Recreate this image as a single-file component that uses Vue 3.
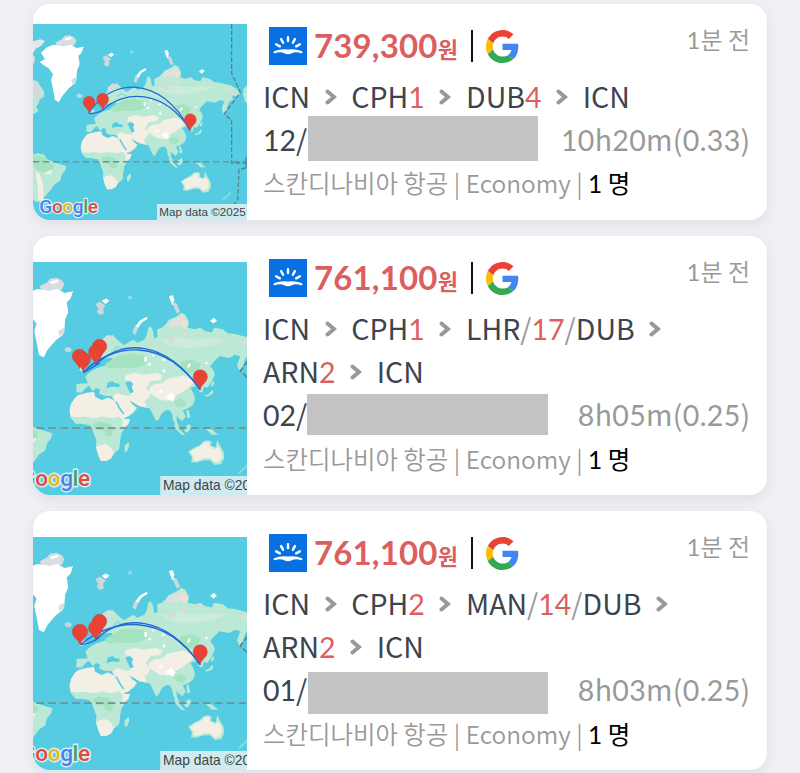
<script setup>
const AIRLINE = '스칸디나비아 항공'

// each stop is a list of [kind, text]: a = airport code, n = stay in days, s = slash
const flights = [
  {
    price: '739,300',
    route: [[['a', 'ICN']], [['a', 'CPH'], ['n', '1']], [['a', 'DUB'], ['n', '4']], [['a', 'ICN']]],
    month: '12',
    mask: { width: '230px', height: '45px', top: '-2px', left: '0px' },
    duration: '10h20m(0.33)',
    wide: false,
    pins: [[266, 339], [307, 330], [570, 391]],
    arcs: ['M266 339 C330 235 480 220 570 391', 'M307 330 C370 270 490 265 570 391', 'M266 341 Q290 341 307 330'],
  },
  {
    price: '761,100',
    route: [[['a', 'ICN']], [['a', 'CPH'], ['n', '1']], [['a', 'LHR'], ['s', '/'], ['n', '17'], ['s', '/'], ['a', 'DUB']], [['a', 'ARN'], ['n', '2']], [['a', 'ICN']]],
    month: '02',
    mask: { width: '241px', height: '41px', top: '-1px', left: '-1px' },
    duration: '8h05m(0.25)',
    wide: true,
    pins: [[317, 317], [307, 331], [266, 342], [276, 350], [571, 394]],
    arcs: ['M276 350 C350 278 475 258 571 394', 'M307 331 C375 268 480 265 571 394', 'M276 351 L317 327'],
  },
  {
    price: '761,100',
    route: [[['a', 'ICN']], [['a', 'CPH'], ['n', '2']], [['a', 'MAN'], ['s', '/'], ['n', '14'], ['s', '/'], ['a', 'DUB']], [['a', 'ARN'], ['n', '2']], [['a', 'ICN']]],
    month: '01',
    mask: { width: '240px', height: '42px', top: '7px', left: '0px' },
    duration: '8h03m(0.25)',
    wide: true,
    pins: [[317, 317], [307, 333], [266, 343], [269, 343], [571, 394]],
    arcs: ['M268 344 C350 278 475 258 571 394', 'M307 331 C375 268 480 265 571 394', 'M269 343 Q295 342 317 325'],
  },
]

// digits and letters are set in different faces
function runs(text) {
  return text.match(/[\d.]+|[^\d.]+/g)
}

const isNum = (s) => /^[\d.]/.test(s)
</script>

<template>
  <main class="list">
    <article v-for="(f, i) in flights" :key="i" class="card" :class="{ 'card-tall': f.wide }">
      <div class="map">
        <svg viewBox="98 72 642 588" preserveAspectRatio="xMidYMid slice">
          <rect x="98" y="60" width="642" height="612" fill="#55cce2" />
          <g :transform="f.wide ? 'translate(0 6)' : ''">
            <!-- Greenland and the Arctic -->
            <polygon fill="#d7dde0" points="165,128 184,118 192,108 208,106 222,112 228,122 222,136 200,138 170,136" />
            <polygon fill="#fff" points="118,186 134,178 122,158 140,142 160,134 190,138 212,134 228,144 250,140 244,158 234,168 238,192 230,212 228,240 224,250 206,264 194,278 184,290 176,307 164,300 158,268 152,240 158,222 144,204 130,196" />
            <polygon fill="#d7dde0" points="213,240 226,232 228,244 216,254" />
            <polygon fill="#fff" points="192,116 212,110 214,116 196,122" />
            <polygon fill="#e3e7e9" points="98,124 120,118 134,122 122,138 106,146 98,160" />
            <polygon fill="#d7dde0" points="98,166 104,172 102,190 98,192" />
            <polygon fill="#cfdcdb" points="98,240 112,244 120,258 130,272 132,290 118,298 110,312 98,318" />
            <polygon fill="#bce9d6" points="98,290 112,294 118,304 108,320 114,332 104,340 98,342" />
            <polygon fill="#ced8dc" points="306,172 318,166 332,176 326,184 328,196 318,200 310,192 314,184" />
            <polygon fill="#fff" points="322,164 334,158 342,164 332,172" />
            <polygon fill="#fff" points="492,152 502,150 506,162 502,170 510,178 500,174" />
            <polygon fill="#ced8dc" points="502,166 512,172 520,192 512,196 506,184" />
            <polygon fill="#fff" points="596,214 606,207 613,214 604,221" />
            <polygon fill="#fff" points="436,204 418,214 406,230 412,236 424,218 438,210" />
            <polygon fill="#ced8dc" points="406,226 400,244 408,250 414,232" />
            <polygon fill="#8fdbe6" points="388,154 396,150 400,158 392,162" />
            <polygon fill="#bfd9dd" points="228,284 238,280 248,287 242,294 232,293" />
            <!-- Eurasia -->
            <polygon fill="#bce9d6" points="258,395 259,374 287,372 281,355 295,342 310,334 330,328 345,322 352,315 348,308 335,308 322,312 312,300 313,285 325,268 335,255 350,250 362,262 378,276 392,268 402,262 412,270 430,262 437,248 440,232 446,228 452,240 455,258 463,256 462,236 474,232 485,222 492,212 510,204 524,194 534,200 542,216 540,232 556,236 572,232 582,240 600,244 606,232 628,236 640,246 660,248 690,256 708,266 720,280 708,290 698,286 695,292 700,300 690,302 684,312 678,330 670,342 664,326 672,304 658,300 645,308 620,304 605,318 596,330 604,338 608,350 598,372 588,384 580,380 576,396 568,392 564,378 556,380 546,384 554,398 558,412 553,426 540,436 527,440 534,456 526,468 516,460 511,454 512,470 520,484 510,480 502,464 500,450 494,440 484,440 474,448 466,464 460,468 452,452 444,436 432,434 418,430 404,422 392,414 400,426 412,434 404,446 390,456 376,462 368,446 358,426 352,412 346,404 330,404 316,398 318,388 308,384 300,392 290,378 282,384 272,396" />
            <polygon fill="#a5e3c0" points="330,324 348,312 370,300 400,296 430,302 440,316 424,330 396,334 366,332 342,336" />
            <polygon fill="#a5e3c0" points="520,318 548,312 572,322 566,342 540,350 524,340" />
            <polygon fill="#a5e3c0" points="505,418 522,410 536,420 528,434 510,430" />
            <polygon fill="#cdebd9" points="470,262 520,256 560,262 600,258 640,262 600,276 550,284 500,280" />
            <polygon fill="#dfe0de" points="486,222 500,212 516,206 526,200 536,210 532,224 510,230 490,232" />
            <polygon fill="#d4dfd9" points="322,262 338,250 352,254 348,262 332,272 322,282" />
            <polygon fill="#d3dcd5" points="486,258 500,252 508,262 498,272 488,268" />
            <polygon fill="#dcdcd8" points="522,246 532,242 536,252 526,256" />
            <polygon fill="#dcdcd8" points="672,266 688,262 698,272 684,276" />
            <polygon fill="#f1dfd5" points="518,222 532,212 542,222 530,234" />
            <polygon fill="#bce9d6" points="265,322 274,320 284,336 268,342 264,332" />
            <polygon fill="#f4efe4" points="383,352 404,346 430,350 460,346 476,352 470,364 446,366 440,376 434,386 446,396 440,410 430,418 436,432 418,430 404,422 392,414 398,424 410,434 402,444 390,454 376,460 358,424 350,406 360,396 378,402 396,404 390,390 400,386 392,368 380,362" />
            <polygon fill="#f4efe4" points="442,384 456,374 476,372 490,360 510,356 530,352 548,362 554,372 540,384 524,396 508,404 490,416 470,414 452,402 442,394" />
            <polygon fill="#fff" points="484,404 498,396 508,408 502,418 488,412" />
            <path fill="#fff" d="M430 306h6v12h-6zM439 322l6-2 2 6-6 2zM450 300l4-2 1 6-4 1zM475 340l5-4 4 5-5 5zM473 312l9-3 1 5-8 2zM500 318l5-2 2 5-6 1zM538 330l6-10 3 6-5 8zM582 320l5-2 4 5-5 1zM466 392l8-4 3 5-8 4z" />
            <!-- inner seas -->
            <polygon fill="#55cce2" points="334,384 338,370 350,366 354,371 368,374 366,382 350,380" />
            <polygon fill="#55cce2" points="382,370 394,366 402,374 398,382 403,394 394,398 388,384" />
            <polyline fill="none" stroke="#8fdbe6" stroke-width="5" points="352,290 362,280 378,288" />
            <!-- Africa -->
            <polygon fill="#f4efe4" points="262,402 285,396 303,394 306,406 322,414 338,408 352,414 362,432 370,448 380,462 394,462 390,474 378,488 370,500 368,520 366,538 354,548 346,562 334,568 320,568 314,555 308,535 310,518 304,502 300,490 292,476 270,472 256,472 244,458 241,440 245,424 254,410" />
            <polygon fill="#bce9d6" points="243,456 262,458 280,456 300,460 326,456 346,460 366,456 376,466 374,482 386,478 372,498 368,520 366,538 354,548 346,536 334,526 318,528 309,534 310,518 304,502 300,490 292,478 270,474 256,474" />
            <polygon fill="#a5e3c0" points="300,476 318,468 344,474 352,486 348,506 334,504 326,492 306,490" />
            <polyline fill="none" stroke="#55cce2" stroke-width="4" points="359,418 367,434 378,450" />
            <polygon fill="#bce9d6" points="380,530 390,520 392,530 386,544 380,544" />
            <!-- South America -->
            <polygon fill="#bce9d6" points="98,464 112,460 132,464 138,476 154,484 176,492 198,498 194,512 184,524 180,542 164,552 154,566 142,580 132,592 128,606 110,606 98,600" />
            <polygon fill="#a5e3c0" points="98,468 116,466 134,474 146,488 162,494 160,508 134,516 112,514 98,494" />
            <polygon fill="#f4efe4" points="106,516 116,520 126,544 130,570 128,600 114,600 112,560" />
            <polygon fill="#f4efe4" points="134,520 150,510 158,512 150,522 138,524" />
            <!-- south east Asia, Japan, Australia -->
            <polygon fill="#bce9d6" points="504,474 514,482 530,500 534,504 524,502 510,488" />
            <polygon fill="#bce9d6" points="530,484 544,474 548,482 540,496 532,494" />
            <polygon fill="#bce9d6" points="584,486 600,488 616,502 600,502" />
            <polygon fill="#bce9d6" points="582,402 592,400 602,388 604,396 598,402 586,406" />
            <polygon fill="#bce9d6" points="598,378 602,366 607,370 603,380" />
            <polygon fill="#bce9d6" points="536,438 542,440 546,458 538,460" />
            <polygon fill="#bce9d6" points="541,545 556,534 570,528 580,518 592,516 600,520 598,530 610,534 614,514 620,528 630,545 632,560 624,576 608,578 596,566 580,566 562,572 548,572 550,558" />
            <polygon fill="#f4efe4" points="544,546 558,537 572,531 582,521 594,520 594,530 608,539 616,532 624,544 626,558 618,570 608,572 596,560 578,562 562,568 554,566 554,556" />
            <polygon fill="#bce9d6" points="740,256 730,266 728,284 734,304 740,312" />
            <polygon fill="#8edbd6" points="690,574 692,580 676,596 668,602 666,598 678,588" />
            <path fill="none" stroke="#6f9495" stroke-width="4.5" stroke-dasharray="19 11" d="M98 485H740" />
            <path fill="none" stroke="#548494" stroke-width="4" stroke-dasharray="14 6" d="M694 72V220L720 277L672 341L694 362V489H740M737 470V510M736 504L716 508L712 600L702 612" />
          </g>
          <path v-for="(d, k) in f.arcs" :key="k" :d="d" fill="none" stroke="#2269d8" stroke-width="3.6" />
          <path
            v-for="(p, k) in f.pins"
            :key="'p' + k"
            :transform="`translate(${p[0]} ${p[1]})`"
            d="M0 0C-2-13-18-19-18-32A18 18 0 0 1 18-32C18-19 2-13 0 0Z"
            fill="#e94335"
            stroke="#c93a30"
            stroke-width="1"
          />
          <text class="map-logo" x="117" y="638">
            <tspan fill="#4c80e8">G</tspan><tspan fill="#e04c40">o</tspan><tspan fill="#edb526">o</tspan><tspan fill="#4c80e8">g</tspan><tspan fill="#43a45c">l</tspan><tspan fill="#e04c40">e</tspan>
          </text>
          <rect x="470" y="612" width="280" height="60" fill="#f5f5f5" fill-opacity=".75" />
          <text class="map-copy" x="477" y="647">Map data ©2025</text>
        </svg>
      </div>

      <div class="info">
        <header class="head">
          <svg class="sky" viewBox="0 0 116 116">
            <rect width="116" height="116" fill="#0770e3" />
            <path d="M58 31V43M37 37L43 48M79 37L73 48M22 53L33 59M94 53L83 59" stroke="#fff" stroke-width="7.5" stroke-linecap="round" />
            <path d="M17 73Q38 65 58 69Q78 65 99 73A3.5 3.5 0 0 1 98 80Q84 75 71 79Q58 87 45 79Q32 75 18 80A3.5 3.5 0 0 1 17 73Z" fill="#fff" />
          </svg>
          <strong class="price">{{ f.price }}<span class="won">원</span></strong>
          <i class="bar"></i>
          <svg class="goog" viewBox="0 0 48 48">
            <path fill="#ea4335" d="M24 9.5c3.54 0 6.71 1.22 9.21 3.6l6.85-6.85C35.9 2.38 30.47 0 24 0 14.62 0 6.51 5.38 2.56 13.22l7.98 6.19C12.43 13.72 17.74 9.5 24 9.5z" />
            <path fill="#4285f4" d="M46.98 24.55c0-1.57-.15-3.09-.38-4.55H24v9.02h12.94c-.58 2.96-2.26 5.48-4.78 7.18l7.73 6c4.51-4.18 7.09-10.36 7.09-17.65z" />
            <path fill="#fbbc05" d="M10.53 28.59c-.48-1.45-.76-2.99-.76-4.59s.27-3.14.76-4.59l-7.98-6.19C.92 16.46 0 20.12 0 24c0 3.88.92 7.54 2.56 10.78l7.97-6.19z" />
            <path fill="#34a853" d="M24 48c6.48 0 11.93-2.13 15.89-5.81l-7.73-6c-2.15 1.45-4.92 2.3-8.16 2.3-6.26 0-11.57-4.22-13.47-9.91l-7.98 6.19C6.51 42.62 14.62 48 24 48z" />
          </svg>
          <time class="ago"><span class="num">1</span>분 전</time>
        </header>

        <div class="route">
          <span v-for="(stop, s) in f.route" :key="s" class="stop">
            <span v-for="(part, k) in stop" :key="k" :class="'part-' + part[0]">{{ part[1] }}</span>
            <svg v-if="s < f.route.length - 1" class="chev" viewBox="0 0 12 16">
              <path d="M2.5 2.5L9 8L2.5 13.5" />
            </svg>
          </span>
        </div>

        <div class="times">
          <span class="month"><span class="num">{{ f.month }}</span>/</span>
          <span class="mask" :style="{ width: f.mask.width, height: f.mask.height, marginTop: f.mask.top, marginLeft: f.mask.left }"></span>
          <span class="duration"><span v-for="(r, k) in runs(f.duration)" :key="k" :class="{ num: isNum(r) }">{{ r }}</span></span>
        </div>

        <div class="meta">{{ AIRLINE }} | Economy | <b><span class="num">1</span> 명</b></div>
      </div>
    </article>
  </main>
</template>

<style>
body {
  background: #efeff4;
  overflow: hidden;
}
</style>

<style scoped>
.list {
  display: flex;
  flex-direction: column;
  gap: 16px;
  box-sizing: border-box;
  height: 773px;
  padding: 4px 33px 0;
  overflow: hidden;
  background: #efeff4;
  font-family: 'Noto Sans CJK KR', sans-serif;
  color: #3d444d;
}

.num { font-family: Lato, 'Noto Sans CJK KR', sans-serif; }

.card {
  display: flex;
  flex-shrink: 0;
  align-items: flex-end;
  border-radius: 17px;
  overflow: hidden;
  background: #fff;
  box-shadow: 0 4px 12px rgba(70, 70, 110, 0.09);
}

/* ── Map ── */
.map {
  flex: none;
  width: 214px;
  height: 196px;
}

.card-tall .map { height: 233px; }

.map svg {
  display: block;
  width: 100%;
  height: 100%;
}

.map-logo {
  font: 500 57px Roboto, sans-serif;
  letter-spacing: -1px;
  paint-order: stroke;
  stroke: #d8f1f8;
  stroke-width: 7px;
  stroke-linejoin: round;
}

.map-copy {
  font: 35px 'Liberation Sans', Arial, sans-serif;
  fill: #444;
}

/* ── Details ── */
.info {
  flex: 1;
  min-width: 0;
  padding: 23px 17px 17px 16px;
}

.head {
  display: flex;
  height: 38px;
  padding-left: 6px;
  margin-bottom: 10px;
}

.sky {
  width: 38px;
  height: 38px;
}

.price {
  margin-left: 7px;
  font: 700 33px/36px Lato, sans-serif;
  letter-spacing: 0.15px;
  color: #dc5f5f;
  white-space: nowrap;
}

.won {
  font: 700 22px/20px 'Noto Sans CJK KR', sans-serif;
}

.bar {
  width: 2px;
  height: 32px;
  margin: 3px 13px 0 12.5px;
  background: #111;
}

.goog {
  width: 33px;
  height: 33px;
  margin-top: 3px;
}

.ago {
  margin-left: auto;
  font-size: 24px;
  font-weight: 350;
  line-height: 24px;
  color: #999;
  white-space: nowrap;
}

.route {
  display: flex;
  flex-wrap: wrap;
  font-size: 28.5px;
  line-height: 42px;
}

.stop {
  display: flex;
  align-items: baseline;
  height: 43px;
}

.part-n {
  font-family: Lato, sans-serif;
  color: #dc5f5f;
}

.part-s { color: #999; }

.chev {
  align-self: center;
  width: 12px;
  height: 16px;
  margin: 0 14.6px;
}

.chev path {
  fill: none;
  stroke: #999;
  stroke-width: 4;
  stroke-linecap: round;
}

.times {
  display: flex;
  align-items: center;
  height: 43px;
  font-size: 28.5px;
  line-height: 41px;
}

.month {
  width: 45px;
  height: 43px;
  white-space: nowrap;
}

.mask {
  position: relative;
  flex: none;
  background: #c3c3c3;
}

.duration {
  height: 43px;
  margin: 0 -0.5px 0 auto;
  letter-spacing: 0.35px;
  color: #999;
  white-space: nowrap;
}

.meta {
  height: 42px;
  font-size: 24.45px;
  font-weight: 350;
  line-height: 44px;
  color: #999;
  white-space: nowrap;
}

.card-tall .meta { line-height: 46px; }

.meta .num,
.ago .num { font-weight: 400; }

.meta b {
  font-weight: 400;
  color: #000;
}
</style>
